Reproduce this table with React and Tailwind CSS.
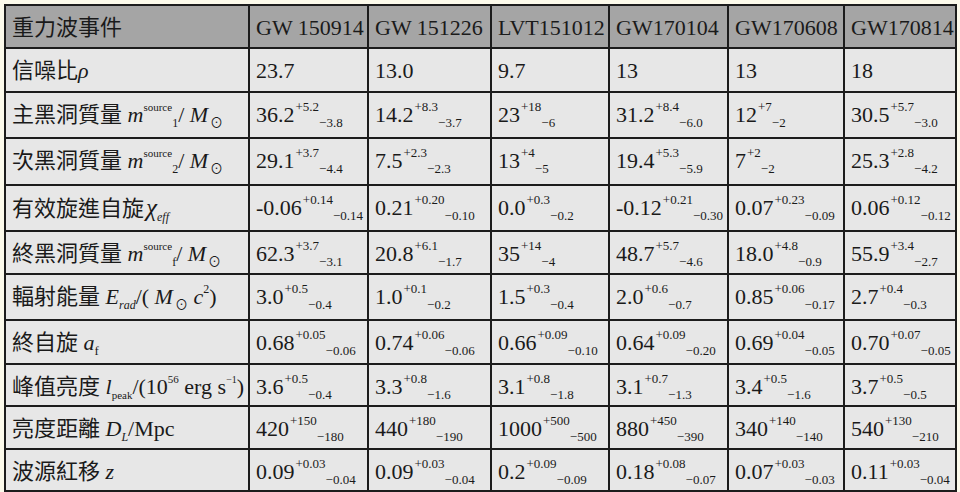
import React from "react";

const Sup = ({ children, cls = "text-[13px]" }) => (
  <span className={"leading-[0] align-[11px] " + cls}>{children}</span>
);
const Sub = ({ children, cls = "text-[13px]" }) => (
  <span className={"leading-[0] align-[-5px] " + cls}>{children}</span>
);
const Sun = () => <Sub cls="text-[13px] ml-[2px]">⊙</Sub>;

const headers = ["GW 150914", "GW 151226", "LVT151012", "GW170104", "GW170608", "GW170814"];

const rows = [
  {
    label: (
      <>
        信噪比<span className="italic">ρ</span>
      </>
    ),
    vals: [["23.7"], ["13.0"], ["9.7"], ["13"], ["13"], ["18"]],
  },
  {
    label: (
      <>
        主黑洞質量 <span className="italic">m</span>
        <Sup cls="text-[11px]">source</Sup>
        <Sub cls="text-[12px]">1</Sub>/ <span className="italic">M</span>
        <Sun />
      </>
    ),
    vals: [
      ["36.2", "+5.2", "−3.8"],
      ["14.2", "+8.3", "−3.7"],
      ["23", "+18", "−6"],
      ["31.2", "+8.4", "−6.0"],
      ["12", "+7", "−2"],
      ["30.5", "+5.7", "−3.0"],
    ],
  },
  {
    label: (
      <>
        次黑洞質量 <span className="italic">m</span>
        <Sup cls="text-[11px]">source</Sup>
        <Sub cls="text-[12px]">2</Sub>/ <span className="italic">M</span>
        <Sun />
      </>
    ),
    vals: [
      ["29.1", "+3.7", "−4.4"],
      ["7.5", "+2.3", "−2.3"],
      ["13", "+4", "−5"],
      ["19.4", "+5.3", "−5.9"],
      ["7", "+2", "−2"],
      ["25.3", "+2.8", "−4.2"],
    ],
  },
  {
    label: (
      <>
        有效旋進自旋<span className="italic text-[25px] ml-[2px]">χ</span>
        <Sub cls="text-[12px] italic">eff</Sub>
      </>
    ),
    vals: [
      ["-0.06", "+0.14", "−0.14"],
      ["0.21", "+0.20", "−0.10"],
      ["0.0", "+0.3", "−0.2"],
      ["-0.12", "+0.21", "−0.30"],
      ["0.07", "+0.23", "−0.09"],
      ["0.06", "+0.12", "−0.12"],
    ],
  },
  {
    label: (
      <>
        終黑洞質量 <span className="italic">m</span>
        <Sup cls="text-[11px]">source</Sup>
        <Sub cls="text-[12px]">f</Sub>/ <span className="italic">M</span>
        <Sun />
      </>
    ),
    vals: [
      ["62.3", "+3.7", "−3.1"],
      ["20.8", "+6.1", "−1.7"],
      ["35", "+14", "−4"],
      ["48.7", "+5.7", "−4.6"],
      ["18.0", "+4.8", "−0.9"],
      ["55.9", "+3.4", "−2.7"],
    ],
  },
  {
    label: (
      <>
        輻射能量 <span className="italic">E</span>
        <Sub cls="text-[12px] italic">rad</Sub>/( <span className="italic">M</span>
        <Sun /> <span className="italic">c</span>
        <Sup cls="text-[12px]">2</Sup>)
      </>
    ),
    vals: [
      ["3.0", "+0.5", "−0.4"],
      ["1.0", "+0.1", "−0.2"],
      ["1.5", "+0.3", "−0.4"],
      ["2.0", "+0.6", "−0.7"],
      ["0.85", "+0.06", "−0.17"],
      ["2.7", "+0.4", "−0.3"],
    ],
  },
  {
    label: (
      <>
        終自旋 <span className="italic">a</span>
        <Sub cls="text-[13px]">f</Sub>
      </>
    ),
    vals: [
      ["0.68", "+0.05", "−0.06"],
      ["0.74", "+0.06", "−0.06"],
      ["0.66", "+0.09", "−0.10"],
      ["0.64", "+0.09", "−0.20"],
      ["0.69", "+0.04", "−0.05"],
      ["0.70", "+0.07", "−0.05"],
    ],
  },
  {
    label: (
      <>
        峰值亮度 <span className="italic">l</span>
        <Sub cls="text-[11px]">peak</Sub>/(10<Sup cls="text-[11px]">56</Sup> erg s
        <Sup cls="text-[10px]">−1</Sup>)
      </>
    ),
    vals: [
      ["3.6", "+0.5", "−0.4"],
      ["3.3", "+0.8", "−1.6"],
      ["3.1", "+0.8", "−1.8"],
      ["3.1", "+0.7", "−1.3"],
      ["3.4", "+0.5", "−1.6"],
      ["3.7", "+0.5", "−0.5"],
    ],
  },
  {
    label: (
      <>
        亮度距離 <span className="italic">D</span>
        <Sub cls="text-[12px] italic">L</Sub>/Mpc
      </>
    ),
    vals: [
      ["420", "+150", "−180"],
      ["440", "+180", "−190"],
      ["1000", "+500", "−500"],
      ["880", "+450", "−390"],
      ["340", "+140", "−140"],
      ["540", "+130", "−210"],
    ],
  },
  {
    label: (
      <>
        波源紅移 <span className="italic">z</span>
      </>
    ),
    vals: [
      ["0.09", "+0.03", "−0.04"],
      ["0.09", "+0.03", "−0.04"],
      ["0.2", "+0.09", "−0.09"],
      ["0.18", "+0.08", "−0.07"],
      ["0.07", "+0.03", "−0.03"],
      ["0.11", "+0.03", "−0.04"],
    ],
  },
];

const Cell = ({ children, head }) => (
  <div
    className={
      "pl-[6px] pt-[9px] text-[22px] leading-[26px] whitespace-nowrap overflow-hidden text-[#1a1a1a] " +
      (head ? "bg-[#a5a5a5]" : "bg-[#e7e7e7]")
    }
  >
    {children}
  </div>
);

const Val = ({ v }) => (
  <>
    {v[0]}
    {v[1] && <Sup cls="text-[13px] ml-[1px]">{v[1]}</Sup>}
    {v[2] && <Sub>{v[2]}</Sub>}
  </>
);

export default function App() {
  return (
    <div
      className="w-[960px] h-[492px] bg-[#fcfaeb] pl-[4px] pt-[4px]"
      style={{ fontFamily: '"Liberation Serif", "Noto Sans CJK TC", serif' }}
    >
      <div className="grid w-[953px] grid-cols-[242px_117px_121px_116px_117px_114px_110px] grid-rows-[41px_42px_44px_45px_44px_41px_44px_42px_40px_41px_40px] gap-[2px] p-[2px] bg-[#1c1c1c]">
        <Cell head>重力波事件</Cell>
        {headers.map((h) => (
          <Cell head key={h}>
            {h}
          </Cell>
        ))}
        {rows.map((r, i) => (
          <React.Fragment key={i}>
            <Cell>{r.label}</Cell>
            {r.vals.map((v, j) => (
              <Cell key={j}>
                <Val v={v} />
              </Cell>
            ))}
          </React.Fragment>
        ))}
      </div>
    </div>
  );
}
